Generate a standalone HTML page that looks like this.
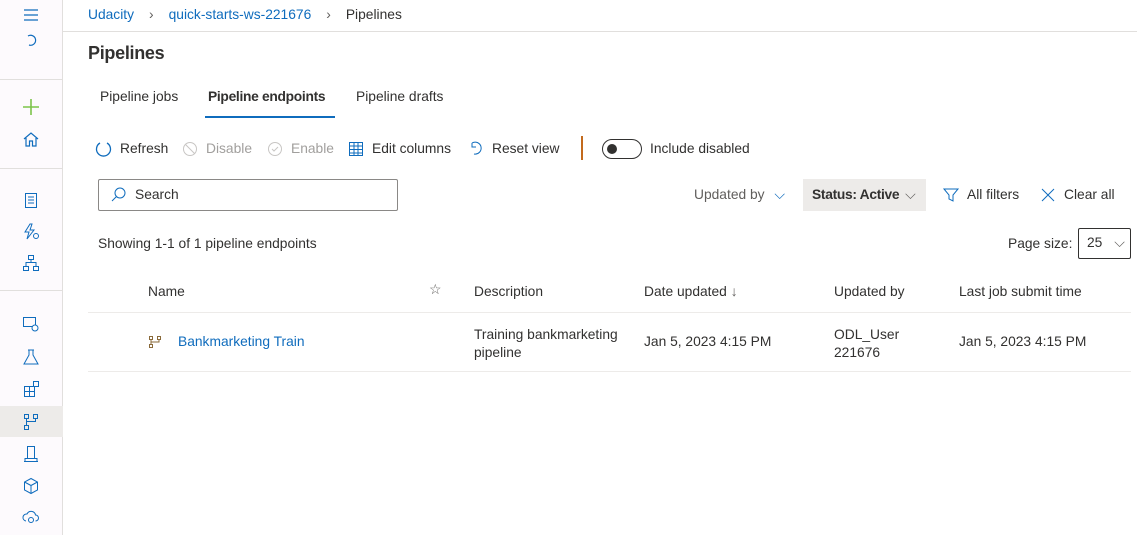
<!DOCTYPE html>
<html><head><style>
*{margin:0;padding:0;box-sizing:border-box}
body{width:1137px;height:535px;overflow:hidden;background:#fff;font-family:"Liberation Sans",sans-serif;font-size:13.8px;color:#323130;position:relative}
.side{position:absolute;left:0;top:0;width:63px;height:535px;background:#fdfafd;border-right:1px solid #e1dfdd}
.sep{position:absolute;left:0;width:63px;border-top:1px solid #e1dfdd}
.ic{position:absolute;left:22px;width:18px;height:18px}
.a{position:absolute;white-space:nowrap}
.blue{color:#0f6cbd}
b{letter-spacing:-0.3px}
svg{overflow:visible}
</style></head><body>
<div class="side">
<svg class="ic" style="top:6px" viewBox="0 0 18 18"><path d="M2 4h14M2 9h14M2 14h14" stroke="#0f6cbd" stroke-width="1.2"/></svg>
<svg class="ic" style="top:32px" viewBox="0 0 18 18"><path d="M6 4a5 5 0 1 1 1 9" stroke="#0f6cbd" fill="none" stroke-width="1.2"/></svg>
<div class="sep" style="top:79px"></div>
<svg class="ic" style="top:98px" viewBox="0 0 18 18"><path d="M9 1v16M1 9h16" stroke="#7cc44a" stroke-width="1.6"/></svg>
<svg class="ic" style="top:130px" viewBox="0 0 18 18"><path d="M2 9L9 3l7 6M4 8v8h3.5v-5h3v5H14V8" stroke="#0f6cbd" fill="none" stroke-width="1.2"/></svg>
<div class="sep" style="top:168px"></div>
<svg class="ic" style="top:191px" viewBox="0 0 18 18"><rect x="3.5" y="2.5" width="11" height="14" stroke="#0f6cbd" fill="none"/><path d="M6 6h6M6 9h6M6 12h6" stroke="#0f6cbd"/></svg>
<svg class="ic" style="top:223px" viewBox="0 0 18 18"><path d="M8 1L3 9h4l-2 7 7-9H8l2-6z" stroke="#0f6cbd" fill="none"/><circle cx="14" cy="13" r="2.5" stroke="#0f6cbd" fill="none"/></svg>
<svg class="ic" style="top:254px" viewBox="0 0 18 18"><rect x="6.5" y="1.5" width="5" height="4" stroke="#0f6cbd" fill="none"/><rect x="1.5" y="12.5" width="5" height="4" stroke="#0f6cbd" fill="none"/><rect x="11.5" y="12.5" width="5" height="4" stroke="#0f6cbd" fill="none"/><path d="M9 5.5v3M4 12.5V8.5h10v4" stroke="#0f6cbd" fill="none"/></svg>
<div class="sep" style="top:290px"></div>
<svg class="ic" style="top:315px" viewBox="0 0 18 18"><rect x="1.5" y="2.5" width="12" height="9" stroke="#0f6cbd" fill="none"/><circle cx="13" cy="13" r="3" stroke="#0f6cbd" fill="#fff"/></svg>
<svg class="ic" style="top:348px" viewBox="0 0 18 18"><path d="M6 2h6M7 2v5L2 16h14L11 7V2" stroke="#0f6cbd" fill="none"/></svg>
<svg class="ic" style="top:380px" viewBox="0 0 18 18"><rect x="2.5" y="6.5" width="10" height="10" stroke="#0f6cbd" fill="none"/><path d="M7.5 6.5v10M2.5 11.5h10" stroke="#0f6cbd"/><rect x="11.5" y="1.5" width="5" height="5" stroke="#0f6cbd" fill="none"/></svg>
<div style="position:absolute;left:0;top:406px;width:63px;height:31px;background:#edebe9"></div>
<svg class="ic" style="top:413px" viewBox="0 0 18 18"><rect x="2.5" y="1.5" width="4" height="4" stroke="#0f6cbd" fill="none"/><rect x="11.5" y="1.5" width="4" height="4" stroke="#0f6cbd" fill="none"/><rect x="2.5" y="12.5" width="4" height="4" stroke="#0f6cbd" fill="none"/><path d="M4.5 5.5v7M13.5 5.5v3h-9" stroke="#0f6cbd" fill="none"/></svg>
<svg class="ic" style="top:445px" viewBox="0 0 18 18"><rect x="5.5" y="1.5" width="7" height="12" stroke="#0f6cbd" fill="none"/><path d="M2 16.5h14M3 16V13.5h12V16" stroke="#0f6cbd" fill="none"/></svg>
<svg class="ic" style="top:477px" viewBox="0 0 18 18"><path d="M9 1.5l6.5 3.5v8L9 16.5 2.5 13V5zM2.5 5L9 8.5 15.5 5M9 8.5v8" stroke="#0f6cbd" fill="none"/></svg>
<svg class="ic" style="top:508px" viewBox="0 0 18 18"><path d="M4 13a3.5 3.5 0 0 1 1-7 4.5 4.5 0 0 1 8.5 1 3 3 0 0 1 0 6" stroke="#0f6cbd" fill="none"/><circle cx="9" cy="12" r="2.5" stroke="#0f6cbd" fill="none"/></svg>
</div>
<div style="position:absolute;left:63px;top:31px;width:1074px;border-top:1px solid #e1dfdd"></div>
<div class="a" style="left:88px;top:7px"><span class="blue">Udacity</span><span style="color:#605e5c;margin:0 15px">›</span><span class="blue">quick-starts-ws-221676</span><span style="color:#605e5c;margin:0 15px">›</span><span>Pipelines</span></div>
<div class="a" style="left:88px;top:43px;font-size:18px"><b>Pipelines</b></div>
<div class="a" style="left:100px;top:89px">Pipeline jobs</div>
<div class="a" style="left:208px;top:89px"><b>Pipeline endpoints</b></div>
<div style="position:absolute;left:205px;top:116px;width:130px;height:2px;background:#0f6cbd"></div>
<div class="a" style="left:356px;top:89px">Pipeline drafts</div>
<svg class="a" style="left:95px;top:140px" width="18" height="18"><path d="M5 3a7 7 0 1 0 7 0" stroke="#0f6cbd" fill="none" stroke-width="1.3"/></svg>
<div class="a" style="left:120px;top:141px">Refresh</div>
<svg class="a" style="left:182px;top:141px" width="16" height="16"><circle cx="8" cy="8" r="6.5" stroke="#c8c6c4" fill="none"/><path d="M3.5 3.5l9 9" stroke="#c8c6c4"/></svg>
<div class="a" style="left:206px;top:141px;color:#a19f9d">Disable</div>
<svg class="a" style="left:267px;top:141px" width="16" height="16"><circle cx="8" cy="8" r="6.5" stroke="#c8c6c4" fill="none"/><path d="M5 8l2 2 4-4" stroke="#c8c6c4" fill="none"/></svg>
<div class="a" style="left:291px;top:141px;color:#a19f9d">Enable</div>
<svg class="a" style="left:348px;top:141px" width="16" height="16"><rect x="1.5" y="1.5" width="13" height="13" stroke="#0f6cbd" fill="none"/><path d="M1.5 5h13M1.5 8.5h13M1.5 12h13M6 1.5v13M10 1.5v13" stroke="#0f6cbd"/></svg>
<div class="a" style="left:372px;top:141px">Edit columns</div>
<svg class="a" style="left:468px;top:140px" width="16" height="18"><path d="M4 3a6 6 0 1 1 2 11M4 3v4h4" stroke="#0f6cbd" fill="none"/></svg>
<div class="a" style="left:492px;top:141px">Reset view</div>
<div style="position:absolute;left:581px;top:136px;width:2px;height:24px;background:#c36a1d"></div>
<div style="position:absolute;left:602px;top:139px;width:40px;height:20px;border:1px solid #323130;border-radius:10px"><div style="position:absolute;left:4px;top:4px;width:10px;height:10px;border-radius:5px;background:#323130"></div></div>
<div class="a" style="left:650px;top:141px">Include disabled</div>
<div style="position:absolute;left:98px;top:179px;width:300px;height:32px;border:1px solid #8a8886;border-radius:2px"></div>
<svg class="a" style="left:110px;top:186px" width="18" height="18"><circle cx="10" cy="7" r="5" stroke="#0f6cbd" fill="none"/><path d="M6.5 10.5L2 15" stroke="#0f6cbd"/></svg>
<div class="a" style="left:135px;top:187px;color:#323130">Search</div>
<div class="a" style="left:694px;top:187px;color:#605e5c">Updated by <span style="margin-left:6px;color:#0f6cbd">⌵</span></div>
<div style="position:absolute;left:803px;top:179px;width:123px;height:32px;background:#edebe9"></div>
<div class="a" style="left:812px;top:187px"><b>Status: Active</b> <span style="color:#605e5c;margin-left:2px">⌵</span></div>
<svg class="a" style="left:943px;top:187px" width="16" height="16"><path d="M1 2h14L10 8v6l-4-2V8z" stroke="#0f6cbd" fill="none"/></svg>
<div class="a" style="left:967px;top:187px">All filters</div>
<svg class="a" style="left:1041px;top:188px" width="14" height="14"><path d="M1 1l12 12M13 1L1 13" stroke="#0f6cbd"/></svg>
<div class="a" style="left:1064px;top:187px">Clear all</div>
<div class="a" style="left:98px;top:236px">Showing 1-1 of 1 pipeline endpoints</div>
<div class="a" style="left:1008px;top:236px">Page size:</div>
<div style="position:absolute;left:1078px;top:228px;width:53px;height:31px;border:1px solid #323130;border-radius:2px"></div>
<div class="a" style="left:1087px;top:235px">25 <span style="margin-left:8px;color:#605e5c">⌵</span></div>
<div class="a" style="left:148px;top:284px">Name</div>
<div class="a" style="left:429px;top:282px;color:#605e5c">☆</div>
<div class="a" style="left:474px;top:284px">Description</div>
<div class="a" style="left:644px;top:284px">Date updated <span style="color:#605e5c">↓</span></div>
<div class="a" style="left:834px;top:284px">Updated by</div>
<div class="a" style="left:959px;top:284px">Last job submit time</div>
<div style="position:absolute;left:88px;top:312px;width:1043px;border-top:1px solid #edebe9"></div>
<svg class="a" style="left:148px;top:335px" width="14" height="14"><rect x="1.5" y="1.5" width="3" height="3" stroke="#8a6a3a" fill="none"/><rect x="9.5" y="1.5" width="3" height="3" stroke="#8a6a3a" fill="none"/><rect x="1.5" y="9.5" width="3" height="3" stroke="#8a6a3a" fill="none"/><path d="M3 4.5v5M11 4.5v2.5H3" stroke="#8a6a3a" fill="none"/></svg>
<div class="a blue" style="left:178px;top:334px">Bankmarketing Train</div>
<div class="a" style="left:474px;top:326px;line-height:18px">Training bankmarketing<br>pipeline</div>
<div class="a" style="left:644px;top:334px">Jan 5, 2023 4:15 PM</div>
<div class="a" style="left:834px;top:326px;line-height:18px">ODL_User<br>221676</div>
<div class="a" style="left:959px;top:334px">Jan 5, 2023 4:15 PM</div>
<div style="position:absolute;left:88px;top:371px;width:1043px;border-top:1px solid #edebe9"></div>
</body></html>
